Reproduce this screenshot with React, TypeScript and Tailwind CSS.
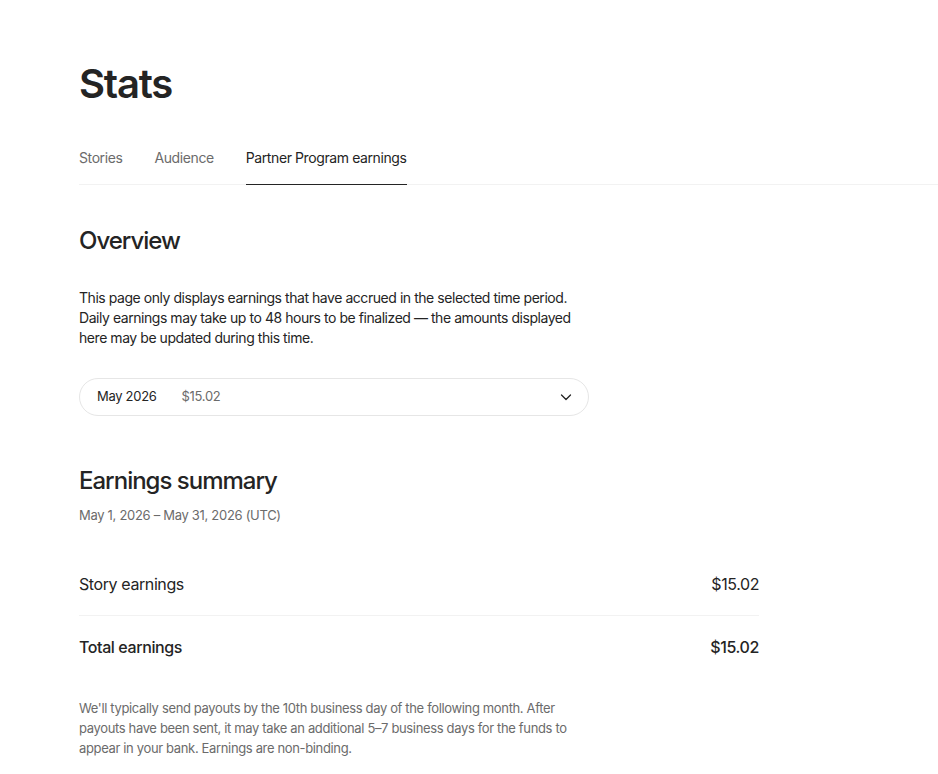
import React from 'react';

const font = { fontFamily: 'Inter, "Liberation Sans", sans-serif' };

const tabs = ['Stories', 'Audience', 'Partner Program earnings'];

const Chevron = () => (
  <svg width="16" height="16" viewBox="0 0 16 16" fill="none">
    <path d="M3.5 6l4.5 4.5L12.5 6" stroke="#242424" strokeWidth="1.3" strokeLinecap="round" strokeLinejoin="round" />
  </svg>
);

const App: React.FC = () => {
  const active = 2;
  return (
    <div className="min-h-screen bg-white text-[#242424] pl-[79px] pt-[58px]" style={font}>
      <h1 className="text-[40px] font-semibold tracking-[-1.2px] leading-[52px]">Stats</h1>

      {/* tab bar */}
      <div className="mt-[38px] flex gap-8 border-b border-[#f2f2f2]">
        {tabs.map((t, i) => (
          <div
            key={t}
            className={`pb-[16px] text-[14px] tracking-[-0.4px] leading-[20px] ${
              i === active ? 'text-[#242424] border-b border-[#242424] -mb-px' : 'text-[#6b6b6b]'
            }`}
          >
            {t}
          </div>
        ))}
      </div>

      <div className="w-[680px]">
        <h2 className="mt-[41px] text-[24px] font-medium tracking-[-1px] leading-[30px]">Overview</h2>

        <p className="mt-[32px] w-[520px] text-[14px] leading-[20px] tracking-[-0.45px]">
          This page only displays earnings that have accrued in the selected time period. Daily earnings may take up
          to 48 hours to be finalized — the amounts displayed here may be updated during this time.
        </p>

        <div className="mt-[30px] w-[510px] h-[38px] rounded-full border border-[#e6e6e6] flex items-center pl-[17px] pr-[14px]">
          <span className="text-[13px] tracking-[-0.3px]">May 2026</span>
          <span className="ml-[25px] text-[13px] tracking-[-0.3px] text-[#6b6b6b]">$15.02</span>
          <span className="ml-auto">
            <Chevron />
          </span>
        </div>

        <h2 className="mt-[50px] text-[24px] font-medium tracking-[-1px] leading-[30px]">Earnings summary</h2>
        <p className="mt-[9px] text-[13px] text-[#6b6b6b] tracking-[-0.3px] leading-[20px]">
          May 1, 2026 – May 31, 2026 (UTC)
        </p>

        <div className="mt-[27px]">
          <div className="flex justify-between items-center h-[64px] border-b border-[#f2f2f2] text-[16px] tracking-[-0.4px]">
            <span>Story earnings</span>
            <span>$15.02</span>
          </div>
          <div className="flex justify-between items-center h-[62px] text-[16px] font-medium tracking-[-0.4px]">
            <span>Total earnings</span>
            <span>$15.02</span>
          </div>
        </div>

        <p className="mt-[20px] w-[500px] text-[13px] text-[#6b6b6b] leading-[20px] tracking-[-0.35px]">
          We'll typically send payouts by the 10th business day of the following month. After payouts have been sent, it
          may take an additional 5–7 business days for the funds to appear in your bank. Earnings are non-binding.
        </p>
      </div>
    </div>
  );
};

export default App;
